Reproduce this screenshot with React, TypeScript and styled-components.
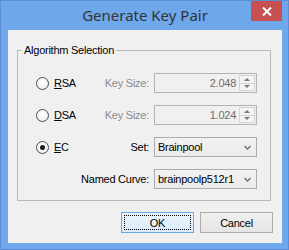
import styled, { createGlobalStyle } from "styled-components";

const GlobalStyle = createGlobalStyle`
  html, body {
    margin: 0;
    padding: 0;
    background: #ffffff;
  }

  body {
    font-family: "Liberation Sans", Arial, sans-serif;
    font-size: 11px;
    letter-spacing: -0.25px;
  }
`;

const Frame = styled.div`
  width: 289px;
  height: 250px;
  box-sizing: border-box;
  display: flex;
  flex-direction: column;
  padding: 0 6px 6px 7px;
  background: #6fa7eb;
  border: 1px solid #5a8fd6;
`;

const TitleBar = styled.div`
  height: 29px;
  display: grid;
  grid-template-columns: 31px 1fr 31px;
  align-items: start;
`;

const Title = styled.div`
  grid-column: 2;
  height: 29px;
  line-height: 29px;
  text-align: center;
  font-family: "Noto Sans", "Open Sans", sans-serif;
  font-size: 15px;
  letter-spacing: 0;
  color: #333333;
`;

const CloseButton = styled.div`
  grid-column: 3;
  height: 20px;
  display: flex;
  align-items: center;
  justify-content: center;
  background: #c75050;
`;

const Client = styled.div`
  flex: 1;
  display: flex;
  flex-direction: column;
  padding: 13px 9px 0 9px;
  background: #f0f0f0;
  color: #000000;
`;

const Group = styled.fieldset`
  margin: 0 2px 0 0;
  padding: 0;
  border: 1px solid #b9b9b9;
  min-width: 0;
`;

const Legend = styled.legend`
  margin-left: 4px;
  padding: 0 2px;
  line-height: 14px;
  color: #000000;
`;

const FormGrid = styled.div`
  display: grid;
  grid-template-columns: 1fr auto 103px;
  grid-auto-rows: 20px;
  column-gap: 5px;
  row-gap: 12px;
  align-items: center;
  padding: 16px 13px 11px 18px;
  white-space: nowrap;
`;

const Choice = styled.label`
  grid-column: 1;
  display: flex;
  align-items: center;
  gap: 5px;
`;

const RadioDot = styled.span<{ $checked?: boolean }>`
  width: 13px;
  height: 13px;
  box-sizing: border-box;
  border-radius: 50%;
  border: 1px solid #4d4d4d;
  background: radial-gradient(circle at 50% 40%, #ffffff 0%, #f4f4f4 55%, #e2e2e2 100%);
  display: flex;
  align-items: center;
  justify-content: center;

  &::after {
    content: "";
    display: ${(p) => (p.$checked ? "block" : "none")};
    width: 5px;
    height: 5px;
    border-radius: 50%;
    background: #1a1a1a;
  }
`;

const Mnemonic = styled.span`
  text-decoration: underline;
  text-underline-offset: 1px;
`;

const FieldLabel = styled.span<{ $disabled?: boolean }>`
  grid-column: 2;
  justify-self: end;
  color: ${(p) => (p.$disabled ? "#8b8b8b" : "#000000")};
`;

const Spinner = styled.div`
  grid-column: 3;
  height: 20px;
  box-sizing: border-box;
  display: flex;
  border: 1px solid #b4b4b4;
  background: #f0f0f0;
`;

const SpinnerValue = styled.span`
  flex: 1;
  align-self: center;
  text-align: right;
  padding-right: 3px;
  color: #6d6d6d;
`;

const SpinnerButtons = styled.div`
  width: 14px;
  margin: 1px 1px 1px 0;
  display: flex;
  flex-direction: column;
  border: 1px solid #d3d3d3;
  background: #f4f4f4;
`;

const SpinnerArrow = styled.div<{ $down?: boolean }>`
  flex: 1;
  display: flex;
  align-items: center;
  justify-content: center;
  border-top: ${(p) => (p.$down ? "1px solid #d3d3d3" : "none")};

  &::after {
    content: "";
    width: 0;
    height: 0;
    border-left: 3px solid transparent;
    border-right: 3px solid transparent;
    ${(p) =>
      p.$down
        ? "border-top: 3px solid #7a7a7a;"
        : "border-bottom: 3px solid #7a7a7a;"}
  }
`;

const Combo = styled.div`
  grid-column: 3;
  height: 20px;
  box-sizing: border-box;
  display: flex;
  align-items: center;
  padding: 0 5px 0 3px;
  border: 1px solid #acacac;
  background: linear-gradient(#f2f2f2, #ebebeb);
  color: #000000;
`;

const ComboText = styled.span`
  flex: 1;
`;

const ButtonRow = styled.div`
  display: flex;
  justify-content: flex-end;
  gap: 6px;
  margin-top: 11px;
`;

const DialogButton = styled.button<{ $default?: boolean }>`
  width: 73px;
  height: 21px;
  padding: 0;
  box-sizing: border-box;
  font-family: "Liberation Sans", Arial, sans-serif;
  font-size: 11px;
  letter-spacing: -0.25px;
  color: #000000;
  border: 1px solid ${(p) => (p.$default ? "#6aa6e8" : "#acacac")};
  background: ${(p) =>
    p.$default
      ? "linear-gradient(#ecf4fc, #dcecfc)"
      : "linear-gradient(#f0f0f0, #e5e5e5)"};
  position: relative;

  ${(p) =>
    p.$default &&
    `
    &::after {
      content: "";
      position: absolute;
      inset: 2px;
      border: 1px dotted #000000;
    }
  `}
`;

const Chevron = () => (
  <svg width="7" height="5" viewBox="0 0 7 5">
    <path d="M0.5 1 L3.5 4 L6.5 1" fill="none" stroke="#6e6e6e" strokeWidth="1.3" />
  </svg>
);

const CloseGlyph = () => (
  <svg width="10" height="9" viewBox="0 0 10 9">
    <path d="M1 0.5 L9 8.5 M9 0.5 L1 8.5" stroke="#ffffff" strokeWidth="2" />
  </svg>
);

const App = () => {
  return (
    <>
      <GlobalStyle />
      <Frame>
        <TitleBar>
          <Title>Generate Key Pair</Title>
          <CloseButton>
            <CloseGlyph />
          </CloseButton>
        </TitleBar>
        <Client>
          <Group>
            <Legend>Algorithm Selection</Legend>
            <FormGrid>
              <Choice>
                <RadioDot />
                <span>
                  <Mnemonic>R</Mnemonic>SA
                </span>
              </Choice>
              <FieldLabel $disabled>Key Size:</FieldLabel>
              <Spinner>
                <SpinnerValue>2.048</SpinnerValue>
                <SpinnerButtons>
                  <SpinnerArrow />
                  <SpinnerArrow $down />
                </SpinnerButtons>
              </Spinner>

              <Choice>
                <RadioDot />
                <span>
                  <Mnemonic>D</Mnemonic>SA
                </span>
              </Choice>
              <FieldLabel $disabled>Key Size:</FieldLabel>
              <Spinner>
                <SpinnerValue>1.024</SpinnerValue>
                <SpinnerButtons>
                  <SpinnerArrow />
                  <SpinnerArrow $down />
                </SpinnerButtons>
              </Spinner>

              <Choice>
                <RadioDot $checked />
                <span>
                  <Mnemonic>E</Mnemonic>C
                </span>
              </Choice>
              <FieldLabel>Set:</FieldLabel>
              <Combo>
                <ComboText>Brainpool</ComboText>
                <Chevron />
              </Combo>

              <FieldLabel>Named Curve:</FieldLabel>
              <Combo>
                <ComboText>brainpoolp512r1</ComboText>
                <Chevron />
              </Combo>
            </FormGrid>
          </Group>
          <ButtonRow>
            <DialogButton $default>OK</DialogButton>
            <DialogButton>Cancel</DialogButton>
          </ButtonRow>
        </Client>
      </Frame>
    </>
  );
};

export default App;
